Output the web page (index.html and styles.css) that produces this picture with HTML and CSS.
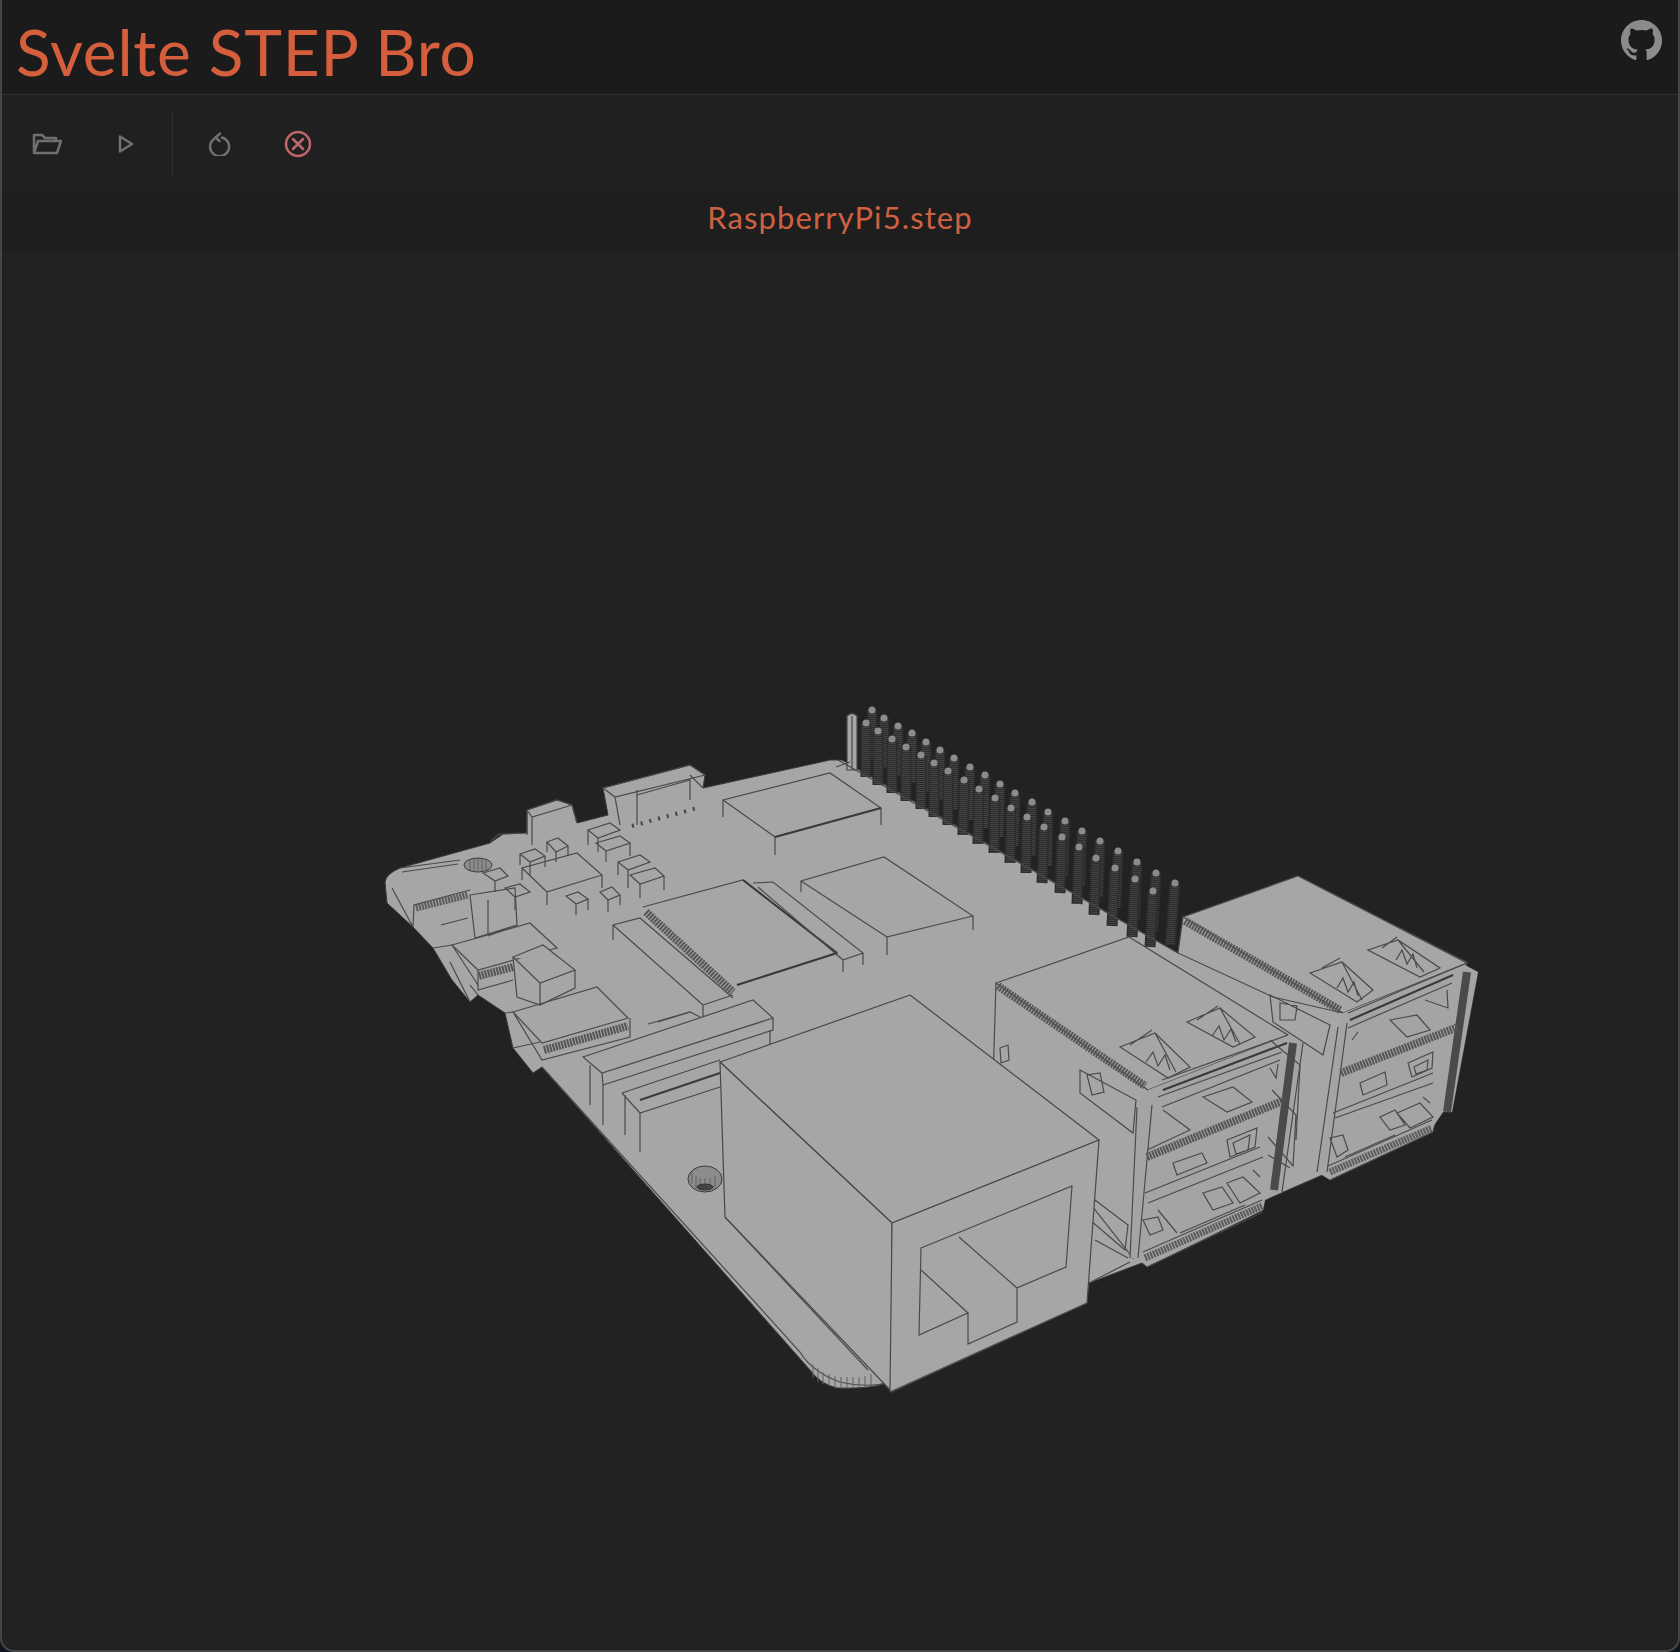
FILE: index.html
```html
<!DOCTYPE html>
<html>
  <head>
    <meta charset="utf-8" />
    <title>Svelte STEP Bro</title>
    <link rel="stylesheet" href="styles.css">
  </head>
  <body>
    <div class="app">
      <header class="topbar">
        <h1 class="brand">Svelte STEP Bro</h1>
        <a class="github" href="#" aria-label="GitHub">
          <svg viewBox="0 0 16 16" width="41" height="41"><path fill="currentColor" d="M8 0C3.58 0 0 3.58 0 8c0 3.54 2.29 6.53 5.47 7.59.4.07.55-.17.55-.38 0-.19-.01-.82-.01-1.49-2.01.37-2.53-.49-2.69-.94-.09-.23-.48-.94-.82-1.13-.28-.15-.68-.52-.01-.53.63-.01 1.08.58 1.23.82.72 1.21 1.87.87 2.33.66.07-.52.28-.87.51-1.07-1.78-.2-3.64-.89-3.64-3.95 0-.87.31-1.59.82-2.15-.08-.2-.36-1.02.08-2.12 0 0 .67-.21 2.2.82.64-.18 1.32-.27 2-.27.68 0 1.36.09 2 .27 1.53-1.04 2.2-.82 2.2-.82.44 1.1.16 1.92.08 2.12.51.56.82 1.27.82 2.15 0 3.07-1.87 3.75-3.65 3.95.29.25.54.73.54 1.48 0 1.07-.01 1.93-.01 2.2 0 .21.15.46.55.38A8.013 8.013 0 0016 8c0-4.42-3.58-8-8-8z"/></svg>
        </a>
      </header>

      <div class="toolbar">
        <button class="tool tool-wide" type="button" aria-label="Open">
          <svg viewBox="0 0 32 24" width="32" height="24"><path d="M3 21V3h8l3 3h11v3M3 21l4-12h23l-4 12z"/></svg>
        </button>
        <button class="tool" type="button" aria-label="Play">
          <svg viewBox="0 0 20 24" width="20" height="24"><path d="M4 4.500 16 12 4 19.500z"/></svg>
        </button>
        <span class="divider"></span>
        <button class="tool" type="button" aria-label="Reset">
          <svg viewBox="0 0 24 24" width="24" height="24"><path d="M7 7a9.500 9.500 0 1 0 8-1.500M13 1.500 8.500 5.500l4 3.500"/></svg>
        </button>
        <button class="tool tool-danger" type="button" aria-label="Close">
          <svg viewBox="0 0 28 28" width="28" height="28"><circle cx="14" cy="14" r="12"/><path d="M9 9l10 10M19 9 9 19"/></svg>
        </button>
      </div>

      <div class="filename">RaspberryPi5.step</div>

      <div class="viewer">
        <svg class="model" viewBox="2 252 1676 1398" width="1676" height="1398">
          <!-- silhouette of the whole board -->
          <path class="body" d="M385 882Q386 874 400 868L490 843 503 834 527 833 527 810 557 800 572 805 577 823 608 815 603 788 690 765 705 775 703 788 830 760 842 760 1178 953 1183 917 1298 876 1467 962 1465 970 1478 972 1452 1112 1443 1112 1435 1123 1433 1132 1330 1180 1327 1173 1265 1200 1263 1210 1147 1267 1142 1263 1089 1283 1087 1303 892 1392 886 1383Q872 1389 837 1388 820 1384 810 1370L542 1067 533 1073 513 1048 505 1013 478 995 470 1002 452 980 433 948 413 927 387 903z"/>

          <!-- header pins, back row then front row -->
          <path class="pin" d="M872 710V760M884 718V768M898 726V776M912 733V783M926 742V792M940 750V800M954 758 953 810M970 767 969 820M985 775 984 828M1000 784 999 837M1015 793 1014 846M1032 802 1031 856M1048 812 1047 866M1065 821 1063 876M1082 831 1080 886M1100 841 1098 897M1118 851 1116 908M1137 862 1135 919M1156 873 1153 931M1175 883 1170 945"/>
          <path class="pin-tex" d="M872 710V760M884 718V768M898 726V776M912 733V783M926 742V792M940 750V800M954 758 953 810M970 767 969 820M985 775 984 828M1000 784 999 837M1015 793 1014 846M1032 802 1031 856M1048 812 1047 866M1065 821 1063 876M1082 831 1080 886M1100 841 1098 897M1118 851 1116 908M1137 862 1135 919M1156 873 1153 931M1175 883 1170 945"/>
          <g class="pin-top">
            <circle cx="872" cy="710" r="3.500"/><circle cx="884" cy="718" r="3.500"/><circle cx="898" cy="726" r="3.500"/><circle cx="912" cy="733" r="3.500"/><circle cx="926" cy="742" r="3.500"/><circle cx="940" cy="750" r="3.500"/><circle cx="954" cy="758" r="3.500"/><circle cx="970" cy="767" r="3.500"/><circle cx="985" cy="775" r="3.500"/><circle cx="1000" cy="784" r="3.500"/><circle cx="1015" cy="793" r="3.500"/><circle cx="1032" cy="802" r="3.500"/><circle cx="1048" cy="812" r="3.500"/><circle cx="1065" cy="821" r="3.500"/><circle cx="1082" cy="831" r="3.500"/><circle cx="1100" cy="841" r="3.500"/><circle cx="1118" cy="851" r="3.500"/><circle cx="1137" cy="862" r="3.500"/><circle cx="1156" cy="873" r="3.500"/><circle cx="1175" cy="883" r="3.500"/>
          </g>
          <path class="pin" d="M866 723V777M878 731V785M892 739V793M906 747V801M921 755V809M934 763V817M948 771V825M964 780 963 835M979 789 978 844M995 798 994 853M1011 808 1010 863M1027 817 1026 873M1044 827 1042 883M1062 837 1060 893M1079 847 1077 904M1096 858 1094 915M1115 868 1112 926M1135 879 1132 937M1153 891 1150 947"/>
          <path class="pin-tex" d="M866 723V777M878 731V785M892 739V793M906 747V801M921 755V809M934 763V817M948 771V825M964 780 963 835M979 789 978 844M995 798 994 853M1011 808 1010 863M1027 817 1026 873M1044 827 1042 883M1062 837 1060 893M1079 847 1077 904M1096 858 1094 915M1115 868 1112 926M1135 879 1132 937M1153 891 1150 947"/>
          <g class="pin-top">
            <circle cx="866" cy="723" r="3.500"/><circle cx="878" cy="731" r="3.500"/><circle cx="892" cy="739" r="3.500"/><circle cx="906" cy="747" r="3.500"/><circle cx="921" cy="755" r="3.500"/><circle cx="934" cy="763" r="3.500"/><circle cx="948" cy="771" r="3.500"/><circle cx="964" cy="780" r="3.500"/><circle cx="979" cy="789" r="3.500"/><circle cx="995" cy="798" r="3.500"/><circle cx="1011" cy="808" r="3.500"/><circle cx="1027" cy="817" r="3.500"/><circle cx="1044" cy="827" r="3.500"/><circle cx="1062" cy="837" r="3.500"/><circle cx="1079" cy="847" r="3.500"/><circle cx="1096" cy="858" r="3.500"/><circle cx="1115" cy="868" r="3.500"/><circle cx="1135" cy="879" r="3.500"/><circle cx="1153" cy="891" r="3.500"/>
          </g>
          <path class="post" d="M847 716V770H857V716Q852 711 847 716z"/>
          <path class="line" d="M852 716V770M838 760 1178 953M836 767 850 762"/>

          <!-- chips on the board -->
          <path class="line" d="M723 817V800L830 773 881 808V825M881 808 775 837V855M775 837 723 800"/>
          <path class="line-heavy" d="M775 837 881 808"/>
          <path class="line" d="M801 892V881L884 857 973 916V930M973 916 887 937V955M887 937 801 881"/>
          <path class="hatch" d="M646 912 733 992"/>
          <path class="line" d="M643 907 743 880 837 953 737 985"/>
          <path class="line-heavy" d="M743 880 837 953M737 985 837 953"/>
          <path class="line" d="M613 940V925L640 918 733 998M613 925 703 1005V1017M703 1005 733 995M753 883 773 882 863 953 843 960V972M843 960 758 887M863 953V965"/>
          <path class="line" d="M522 880V868L577 853 602 875V888M602 875 547 892V905M547 892 522 868"/>
          <path class="line" d="M658 1022 690 1012 700 1017M520 854 535 849 545 856 530 862zM520 854V865M530 862V875M545 856V867M547 842 558 838 568 846 556 852zM547 842V852M556 852V862M568 846V856M588 830 610 823 620 830 598 838zM598 838V852M588 830V845M596 843 620 836 630 843 606 851zM606 851V862M630 843V856M618 862 640 855 650 862 628 870zM628 870V888M618 862V875M630 875 655 868 664 876 640 884zM640 884V898M664 876V890M566 896 578 892 588 899 576 904zM576 904V915M588 899V910M600 892 612 887 620 895 608 900zM608 900V912M620 895V905M483 873 500 868 508 876 495 881zM495 881V892M505 888 520 884 530 892 515 897zM515 897V910"/>

          <!-- usb-c and round hole at the corner -->
          <path class="line" d="M400 868 460 860M402 872 458 864"/>
          <ellipse class="hole-lip" cx="478" cy="865" rx="14" ry="7"/>
          <path class="ticks" d="M470 860V870M474 859V871M478 859V871M482 859V871M486 860V870"/>
          <path class="hatch-thin" d="M416 908 468 895"/>
          <path class="line" d="M470 895 515 888 517 925 475 938zM515 888 517 925 488 936M488 900V935M413 927 414 905 470 890M392 888 413 927M441 925 468 918"/>
          <path class="line" d="M527 810 557 800 572 805 577 823M527 810 532 817 572 805M532 817V845M527 810V835M490 843Q497 833 503 834L520 833M603 788 690 765 705 775 615 797zM615 797 620 825M637 790V825M637 795 690 780V800M690 775 703 788"/>
          <path class="ticks-dark" d="M632 826 697 808"/>

          <!-- micro hdmi sockets -->
          <path class="line" d="M452 945 530 923 557 948 478 970zM452 945 478 985M478 970V990L513 980"/>
          <path class="hatch" d="M479 976 513 967"/>
          <path class="body-line" d="M513 957 543 945 575 970 540 983zM513 957 517 997 540 1005 575 988V970M540 983V1005"/>
          <path class="line" d="M450 962 470 1002M433 948 452 945M470 985 478 995M505 1013 513 1012M513 1048 540 1042"/>
          <path class="line" d="M513 1012 597 987 628 1018 542 1043zM513 1012 542 1060 630 1037V1018M648 1024 690 1012"/>
          <path class="hatch" d="M544 1050 628 1026"/>

          <!-- flat connectors in front of the rj45 -->
          <path class="body-line" d="M583 1057 753 1000 773 1018 602 1073zM602 1073 603 1085 773 1030V1018"/>
          <path class="line" d="M590 1065V1105M603 1085V1125M770 1030V1050M622 1093 720 1060M622 1093 640 1113 720 1087M640 1113V1152M625 1095V1135"/>
          <path class="line-heavy" d="M640 1100 720 1073"/>

          <!-- bottom corner of the board -->
          <path class="line" d="M542 1067 800 1352Q812 1372 840 1382 868 1388 886 1383M725 1217 868 1370"/>
          <path class="ticks" d="M813 1364V1378M818 1368V1382M823 1372V1384M829 1374V1386M835 1376V1388M841 1377V1388M847 1377V1388M853 1377V1388M859 1377V1388M865 1376V1387M871 1374V1386"/>
          <ellipse class="hole-lip" cx="705" cy="1179" rx="17" ry="13"/>
          <path class="ticks" d="M692 1172V1184M696 1176V1188M700 1178V1190M705 1178V1190M710 1178V1190M715 1176V1188"/>
          <ellipse class="hole" cx="705" cy="1187" rx="8" ry="3"/>

          <!-- usb stack 1 -->
          <path class="body-line" d="M996 983 1129 937 1288 1035 1148 1090zM996 983 993 1080 1133 1258 1152 1103 1148 1090"/>
          <path class="hatch" d="M998 986 1145 1086"/>
          <path class="wall" d="M1148 1090 1288 1035 1303 1043 1282 1192 1265 1200 1263 1210 1147 1267 1143 1258 1130 1258 1137 1107z"/>
          <path class="line" d="M1137 1107 1130 1258M1152 1105 1138 1258M1162 1080 1288 1035M1163 1090 1287 1043M1158 1097 1282 1052M1162 1107 1280 1060M1163 1110 1190 1130 1147 1150M1203 1097 1233 1087 1252 1102 1227 1112zM1270 1068 1276 1078 1278 1064M1303 1043 1282 1192M1145 1193 1260 1147M1148 1203 1263 1157M1173 1163 1202 1153 1207 1163 1177 1175zM1227 1140 1257 1128 1255 1147 1230 1157zM1233 1143 1250 1135 1248 1150 1236 1154zM1253 1170 1260 1177M1158 1210 1177 1233M1203 1193 1222 1187 1233 1203 1213 1210zM1227 1183 1243 1177 1260 1193 1240 1203zM1143 1220 1158 1217 1163 1230 1150 1235zM1180 1233 1245 1205"/>
          <path class="line-heavy" d="M1163 1090 1287 1043"/>
          <path class="line-dark" d="M1293 1043 1274 1190"/>
          <path class="hatch" d="M1147 1157 1285 1100"/>
          <path class="line" d="M1120 1047 1155 1033 1190 1067 1168 1078zM1187 1022 1220 1008 1255 1037 1233 1047zM1130 1045 1152 1030M1155 1033 1176 1072M1197 1020 1218 1006M1220 1008 1240 1044M1146 1062 1153 1052 1158 1066 1165 1055 1170 1070M1212 1036 1219 1026 1224 1040 1231 1029 1236 1042"/>
          <path class="hatch-thin" d="M1145 1258 1262 1206"/>
          <path class="line" d="M1147 1267 1263 1212M1143 1252 1262 1200"/>
          <path class="line" d="M1080 1070 1136 1100 1133 1133 1080 1093zM1087 1075 1100 1073 1104 1092 1092 1095zM1000 1048 1008 1045 1009 1060 1001 1063zM1095 1200 1128 1225 1125 1250 1090 1220zM1089 1283 1130 1262M1095 1240 1128 1258"/>

          <!-- usb stack 2 -->
          <path class="body-line" d="M1183 917 1298 876 1467 963 1343 1013zM1183 917 1178 953 1273 997 1343 1013"/>
          <path class="hatch" d="M1185 921 1340 1010"/>
          <path class="wall" d="M1343 1013 1465 965 1478 972 1452 1112 1443 1112 1433 1127 1330 1180 1317 1172 1338 1027z"/>
          <path class="line" d="M1338 1027 1317 1172M1347 1023 1327 1172M1270 995 1330 1025 1323 1055 1273 1022zM1280 1003 1297 1006 1295 1020 1280 1020zM1270 1040 1300 1065 1296 1140M1272 1090 1296 1115 1293 1166 1268 1137M1268 1155 1290 1168M1348 1013 1467 963M1350 1020 1453 975M1348 1028 1452 983M1358 1032 1352 1040M1390 1020 1417 1015 1430 1030 1407 1037zM1425 1000 1448 1008 1447 990M1360 1083 1385 1072 1387 1085 1363 1095zM1408 1063 1433 1052 1432 1068 1412 1077zM1414 1067 1428 1060 1427 1070 1416 1074zM1333 1113 1433 1073M1335 1118 1433 1083M1423 1097 1430 1103M1380 1117 1395 1110 1405 1125 1390 1130zM1397 1113 1420 1103 1433 1117 1410 1128zM1330 1138 1343 1135 1348 1150 1337 1157zM1345 1157 1395 1135"/>
          <path class="line-heavy" d="M1350 1020 1453 975"/>
          <path class="line-dark" d="M1467 972 1447 1112"/>
          <path class="hatch" d="M1341 1073 1458 1027"/>
          <path class="line" d="M1310 973 1342 962 1373 990 1357 1002zM1368 950 1398 940 1440 968 1420 977zM1322 968 1340 958M1342 962 1362 1000M1382 948 1397 937M1398 940 1424 972M1337 988 1343 978 1348 992 1354 982 1358 996M1396 960 1402 950 1407 964 1413 954 1417 968"/>
          <path class="hatch-thin" d="M1330 1172 1432 1128"/>
          <path class="line" d="M1330 1180 1433 1132M1328 1166 1432 1120"/>

          <!-- rj45 last, it sits in front of everything -->
          <path class="face" d="M720 1062 910 995 1099 1140 892 1223z"/>
          <path class="face" d="M720 1062 725 1217 892 1392 892 1223z"/>
          <path class="face" d="M892 1223 1099 1140 1087 1303 890 1392z"/>
          <path class="line" d="M921 1248 1072 1186 1066 1267 1017 1288V1322L968 1344V1313L919 1335 921 1248zM959 1237 1017 1288M921 1270 968 1313"/>
        </svg>
      </div>
    </div>
  </body>
</html>
```

FILE: styles.css
```css
/* Basic page frame */
* {
  box-sizing: border-box;
}
body {
  margin: 0;
  background-color: #0e131d;
  font-family: Lato, "Noto Sans", sans-serif;
}
.app {
  width: 1680px;
  height: 1652px;
  display: flex;
  flex-direction: column;
  overflow: hidden;
  background-color: #222;
  border: 2px solid #464646;
  border-top: none;
  border-radius: 0 0 14px 14px;
}

/* Top bar */
.topbar {
  height: 95px;
  flex-shrink: 0;
  display: flex;
  justify-content: space-between;
  padding: 0 16px 0 14px;
  background-color: #1b1b1b;
  border-bottom: 1px solid #303030;
}
.brand {
  margin: 14px 0 0;
  font-size: 64px;
  font-weight: 400;
  line-height: 76px;
  letter-spacing: 0.8px;
  color: #d55f3c;
}
.github {
  margin-top: 20px;
  color: #8b8b8b;
}

/* Toolbar */
.toolbar {
  height: 95px;
  flex-shrink: 0;
  display: flex;
  align-items: center;
  padding: 2px 0 0 28px;
  background-color: #202020;
}
.tool {
  width: 60px;
  height: 32px;
  padding: 0;
  margin: 0 8px 0 0;
  display: flex;
  align-items: center;
  justify-content: center;
  background: none;
  border: none;
  color: #707070;
}
.tool svg {
  fill: none;
  stroke: currentColor;
  stroke-width: 2.5;
  stroke-linejoin: round;
  stroke-linecap: round;
}
.tool-wide {
  width: 34px;
  margin-right: 32px;
}
.tool-danger {
  margin-left: 11px;
  color: #c0666d;
}
.divider {
  width: 1px;
  height: 64px;
  margin: 0 16px 0 8px;
  background-color: #2d2d2d;
}

/* File name row */
.filename {
  height: 62px;
  flex-shrink: 0;
  padding-top: 8px;
  text-align: center;
  font-size: 31px;
  line-height: 38px;
  letter-spacing: 1.1px;
  color: #cf6143;
  background-color: #1e1e1e;
}

/* 3d view */
.viewer {
  flex: 1;
}
.model {
  display: block;
  filter: blur(0.4px);
}
.body {
  fill: #a6a6a6;
  stroke: #3a3a3a;
  stroke-width: 1;
}
.face {
  fill: #a6a6a6;
  stroke: #484848;
  stroke-width: 1.2;
  stroke-linejoin: round;
}
.wall {
  fill: #a4a4a4;
  stroke: none;
}
.body-line {
  fill: #a6a6a6;
  stroke: #4a4a4a;
  stroke-width: 1.2;
}
.line {
  fill: none;
  stroke: #4a4a4a;
  stroke-width: 1.2;
}
.line-heavy {
  fill: none;
  stroke: #3a3a3a;
  stroke-width: 2;
}
.line-dark {
  fill: none;
  stroke: #4a4a4a;
  stroke-width: 8;
}
.hatch {
  fill: none;
  stroke: #555;
  stroke-width: 8;
  stroke-dasharray: 2 1;
}
.hatch-thin {
  fill: none;
  stroke: #5c5c5c;
  stroke-width: 7;
  stroke-dasharray: 2 1;
}
.ticks {
  fill: none;
  stroke: #606060;
  stroke-width: 1;
}
.ticks-dark {
  fill: none;
  stroke: #444;
  stroke-width: 4;
  stroke-dasharray: 2 7;
}
.hole {
  fill: #444;
  stroke: #333;
  stroke-width: 1;
}
.hole-lip {
  fill: #8c8c8c;
  stroke: #3a3a3a;
  stroke-width: 1;
}
.pin {
  fill: none;
  stroke: #2c2c2c;
  stroke-width: 11;
}
.pin-tex {
  fill: none;
  stroke: #444;
  stroke-width: 8;
  stroke-dasharray: 1 1;
}
.pin-top circle {
  fill: #8c8c8c;
}
.post {
  fill: #a6a6a6;
  stroke: #484848;
  stroke-width: 1.2;
}
```
